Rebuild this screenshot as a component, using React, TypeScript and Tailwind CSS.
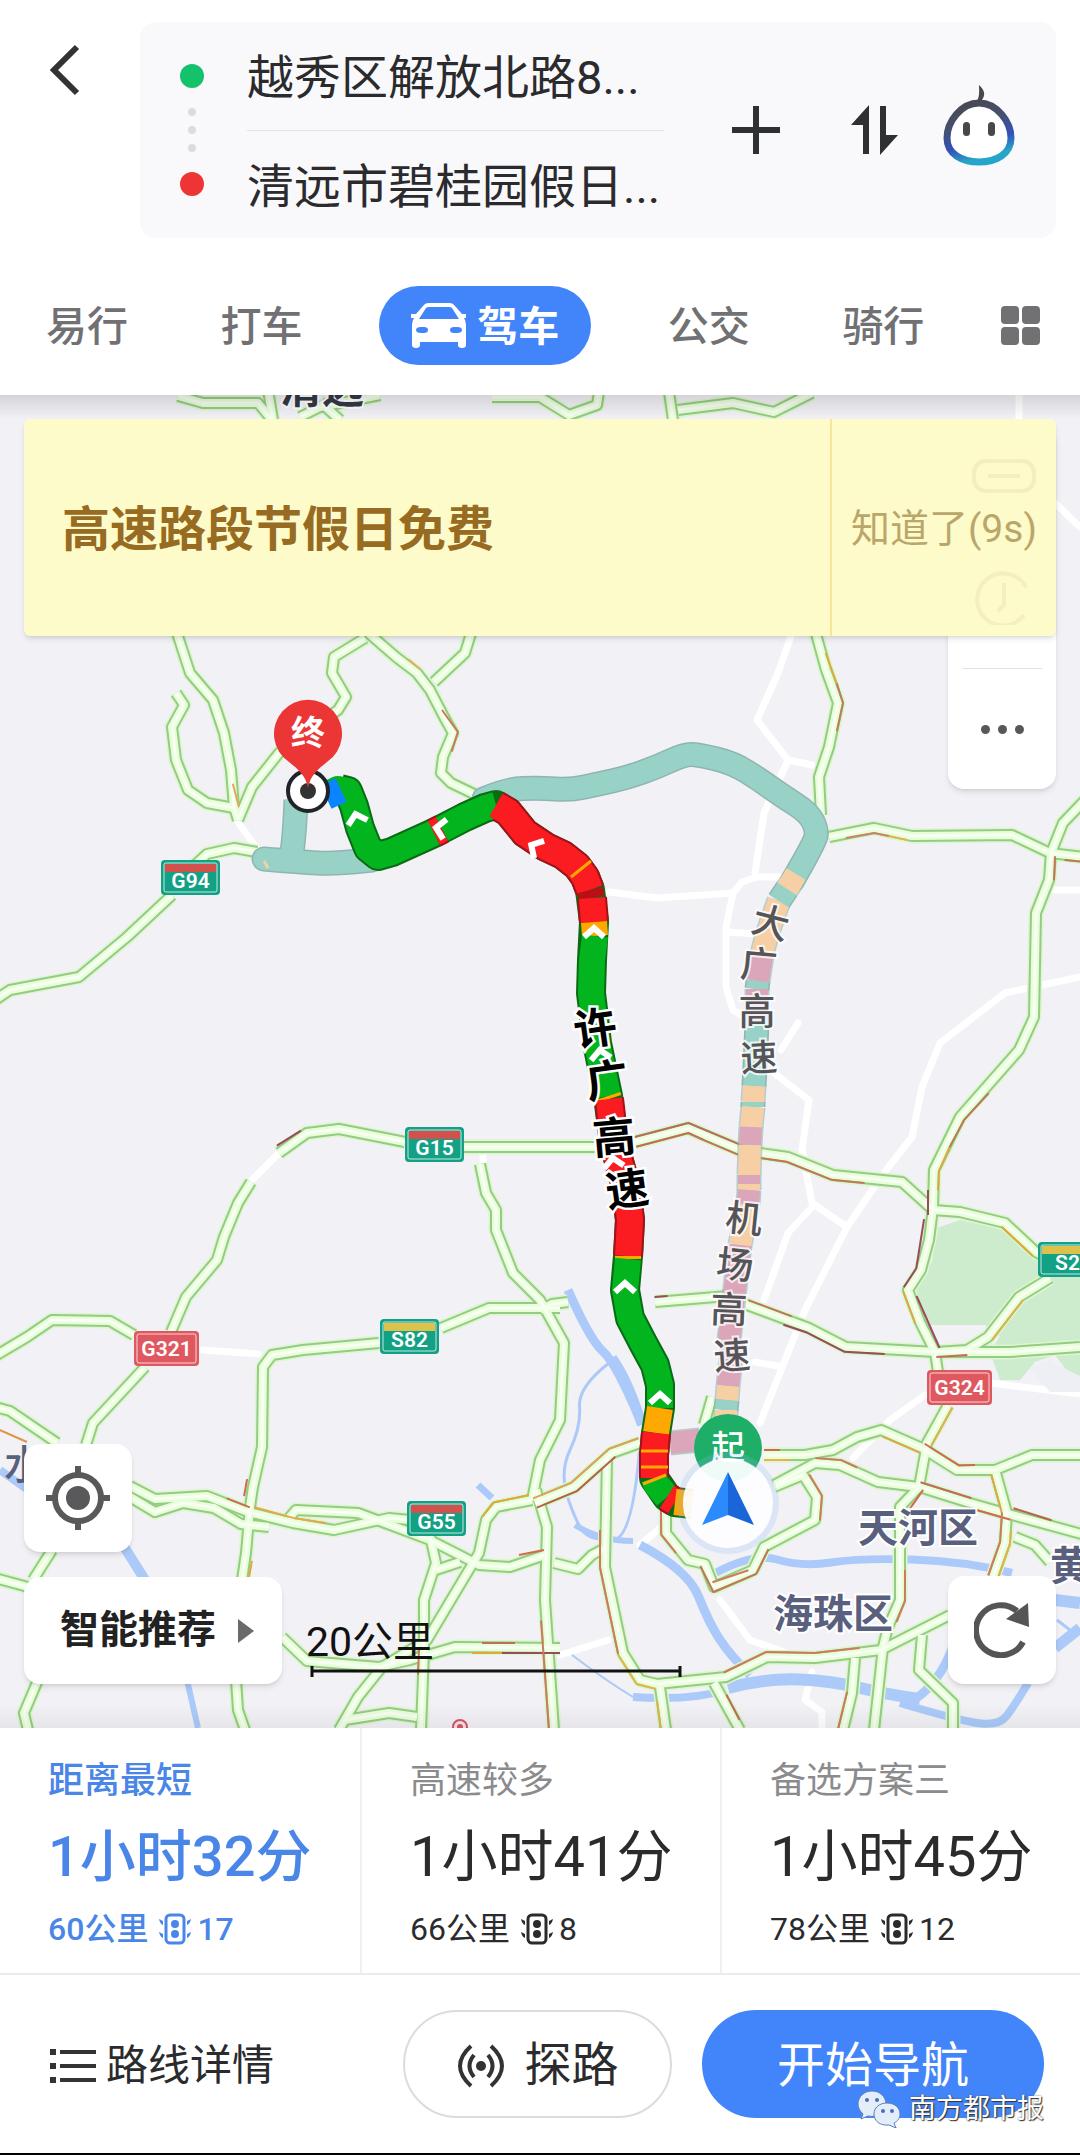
import React from 'react';

type Point = [number, number];

const TEAL = '#98d2c6';
const PEACH = '#f7cfa5';
const PINK = '#dba6b9';
const GREEN = '#02b51e';
const RED = '#fb1c22';
const ORANGE = '#ffa800';

const parse = (s: string): Point[] =>
  s.split(' ').map((p) => p.split(',').map(Number) as Point);

const line = (s: string) => 'M' + s.split(' ').join('L');

// rounded version of a polyline, it bends through the middle of each segment
const smooth = (s: string) => {
  const p = parse(s);
  let d = `M${p[0]}`;
  for (let i = 1; i < p.length - 1; i++) {
    const last = i === p.length - 2;
    const ex = last ? p[i + 1][0] : (p[i][0] + p[i + 1][0]) / 2;
    const ey = last ? p[i + 1][1] : (p[i][1] + p[i + 1][1]) / 2;
    d += `Q${p[i]} ${ex},${ey}`;
  }
  return p.length < 3 ? line(s) : d;
};

// moves a polyline sideways, used for the traffic colour on one lane
const shift = (s: string, by: number) => {
  const p = parse(s);
  const moved = p.map(([x, y], i) => {
    const a = p[Math.max(i - 1, 0)];
    const b = p[Math.min(i + 1, p.length - 1)];
    const len = Math.hypot(b[0] - a[0], b[1] - a[1]) || 1;
    return `${x - ((b[1] - a[1]) / len) * by},${y + ((b[0] - a[0]) / len) * by}`;
  });
  return 'M' + moved.join('L');
};

const whiteRoads = [
  '1019,395 1019,418',
  '1055,503 1080,527',
  '791,636 778,673 757,720 788,760 812,765',
  '788,760 764,813 755,873',
  '609,892 657,898 733,893 726,927 726,987 733,1010 750,1020',
  '733,893 742,882 757,877 785,877',
  '726,932 760,934',
  '798,1023 781,1050',
  '1053,890 1080,890',
  '1080,977 1005,993 940,1043 922,1087 912,1137 884,1173 847,1227 805,1310 760,1423',
  '774,1073 809,1100 802,1150 812,1203 847,1227',
  '812,1207 788,1233 764,1300',
  '252,1180 279,1153',
  '203,1350 258,1354',
  '483,1154 483,1164',
  '238,822 258,850',
  '27,1337 8,1349',
  '990,1383 1080,1394',
  '720,1600 750,1640 800,1658',
  '812,1672 805,1700 822,1712 822,1728',
  '640,1545 660,1528 664,1528',
  '853,1458 890,1420 925,1395',
  '755,1362 778,1366',
  '560,1655 608,1640',
];

const rivers: [string, number][] = [
  ['568,1290 590,1340 616,1363 640,1420', 9],
  ['612,1358 628,1380 642,1425', 10],
  ['609,1363 578,1387 581,1427 559,1473 578,1527 592,1540 633,1540 640,1443', 3],
  ['575,1525 600,1541 633,1541', 6],
  ['640,1545 688,1570 709,1623 730,1655 750,1675', 9],
  ['708,1577 752,1552 802,1567 860,1558 964,1561 1012,1573', 8],
  ['728,1688 767,1678 833,1681 884,1694 920,1699', 12],
  ['905,1705 940,1688 955,1640', 9],
  ['900,1703 950,1718 998,1727 1015,1705 1028,1683', 8],
  ['633,1697 690,1701 726,1690', 8],
  ['572,1655 605,1680 633,1697', 2],
  ['1055,1600 1080,1603', 12],
  ['1055,1648 1080,1628', 11],
  ['1057,1620 1070,1630', 3],
  ['123,1545 145,1580', 10],
  ['187,1680 198,1728', 6],
  ['478,1485 492,1498', 7],
  ['0,1470 28,1490', 8],
];

const roads = [
  '178,396 203,403 258,403 272,420',
  '268,390 273,420',
  '380,395 320,407 300,417',
  '320,402 340,420',
  '492,397 540,397 569,415 597,405 599,392',
  '669,392 673,420',
  '678,410 733,403 774,412 812,393',
  '176,630 190,673 213,700 224,733 231,770 234,807 238,820',
  '176,693 184,705 172,727 176,760 188,790 207,803 234,808',
  '238,820 252,787 279,753 310,730 338,710 346,697 332,673 334,657 365,638',
  '365,630 396,657 417,673 430,690 444,717 453,733 443,757 441,773 451,783 476,795',
  '472,630 465,653 434,682',
  '257,852 234,848 207,854 195,865',
  '172,895 127,937 79,977 10,990 -5,1000',
  '815,630 826,670 838,703 829,747 819,777 821,815',
  '829,837 874,828 912,836 1012,835 1050,853 1085,857',
  '1085,800 1063,823 1051,853 1049,880 1036,913 1034,1017 1019,1050 960,1117 934,1170 933,1208 929,1240 921,1270 908,1290 920,1322 935,1352 938,1372',
  '462,1147 605,1147',
  '405,1142 339,1129 307,1133 279,1153',
  '251,1182 238,1203 224,1237 217,1260 186,1297 171,1332',
  '145,1367 93,1423 86,1445',
  '52,1550 33,1580',
  '38,1680 24,1713 28,1730',
  '134,1335 110,1321 52,1320 27,1337 -5,1356',
  '441,1328 489,1308 560,1308',
  '379,1343 303,1350 272,1355 263,1367 262,1447 253,1487 250,1507 246,1553 242,1580',
  '236,1680 238,1710 245,1730',
  '480,1164 486,1193 496,1210 496,1230 513,1273 540,1300 564,1343 560,1420 540,1460 532,1500',
  '532,1500 496,1507 486,1520 479,1553 427,1640 382,1667 358,1697 339,1730',
  '130,1486 155,1499 207,1496 248,1512 293,1523 334,1530 389,1518 410,1520',
  '130,1497 155,1512 183,1503 214,1508 241,1524 269,1527',
  '289,1518 296,1510 358,1513 385,1523 430,1540 479,1565 510,1567 545,1555',
  '430,1536 436,1563 424,1600 424,1650 421,1730',
  '436,1570 460,1562',
  '282,1637 307,1661 379,1667 410,1660 455,1647 560,1648',
  '345,1720 389,1713 417,1717',
  '-5,1407 10,1411 57,1443',
  '-5,1578 28,1587',
  '635,1142 688,1128 740,1150 788,1157 833,1175 902,1182 933,1210 960,1212 1005,1223 1036,1252 1050,1260',
  '1050,1278 1019,1297 988,1337 967,1350 936,1352',
  '655,1302 728,1296 747,1305 809,1328 846,1347 936,1352 1010,1352 1080,1347',
  '764,1455 805,1455 833,1450 857,1437 881,1430 922,1448 957,1470 995,1470 1032,1455 1085,1455',
  '774,1485 815,1463 840,1465 878,1482 919,1487 970,1503 1012,1515 1085,1535',
  '948,1405 927,1443 919,1487 900,1507 900,1600 888,1627 883,1647 874,1730',
  '996,1473 1007,1513 1005,1543 993,1577',
  '774,1487 803,1475 817,1497 815,1520 764,1547 753,1570 714,1587 705,1564 688,1560 666,1533 666,1510',
  '535,1503 574,1487 612,1453 640,1443',
  '607,1457 605,1567 623,1653 640,1680 657,1684 726,1677 767,1657 815,1658 881,1650 950,1615',
  '536,1490 547,1527 545,1600 554,1730',
  '554,1563 578,1569 592,1555 607,1547',
  '660,1687 666,1730',
  '714,1683 740,1730',
  '855,1658 852,1693 843,1730',
  '922,1635 919,1670 953,1703 953,1730',
  '1015,1537 1035,1545 1050,1562',
  '712,1397 704,1425',
  '540,1310 552,1304 568,1302',
];

const traffic: [string, number, string][] = [
  ['438,713 453,733 447,750', -5, '#c87a5c'],
  ['405,663 417,673', -5, '#e0b060'],
  ['228,785 234,808', -5, '#e5a65c'],
  ['821,655 832,685', -5, '#e2a93a'],
  ['832,685 838,703 832,730', -5, '#c17a5c'],
  ['845,833 874,828 890,831', 5, '#c88468'],
  ['890,831 908,835', 5, '#e8b44a'],
  ['1050,856 1049,880', -5, '#c47458'],
  ['1065,855 1085,857', 5, '#c47458'],
  ['985,1090 960,1117 945,1145', -5, '#c0755a'],
  ['945,1145 934,1170 933,1190', -5, '#e0a546'],
  ['933,1190 933,1215', 5, '#9c4a5e'],
  ['929,1220 921,1270 908,1290', 5, '#9c4a5e'],
  ['908,1290 920,1322', 5, '#e0a546'],
  ['912,1298 935,1350', -5, '#9c4a5e'],
  ['303,1134 279,1149', 4, '#9c4a5e'],
  ['635,1142 688,1128 705,1135', 5, '#c46c5a'],
  ['635,1142 688,1128 740,1150', -5, '#b96c60'],
  ['700,1133 740,1150', 5, '#c47458'],
  ['760,1153 788,1157 833,1175 865,1178', 5, '#c47458'],
  ['1005,1223 1036,1252', 5, '#e0a93a'],
  ['1019,1297 988,1337', -5, '#e0b24a'],
  ['655,1302 668,1301', -5, '#9c4a5e'],
  ['747,1305 790,1321', -5, '#c47458'],
  ['785,1320 809,1328 846,1347 885,1349', 5, '#9c4a5e'],
  ['967,1350 936,1352', -5, '#c46c5a'],
  ['249,1497 252,1480', -5, '#cf6a4e'],
  ['225,1503 248,1512', -5, '#cf6a4e'],
  ['253,1512 293,1523 325,1528', -5, '#e8a64a'],
  ['247,1560 244,1577', -5, '#e0a93a'],
  ['530,1500 496,1507 486,1520', 5, '#e0a93a'],
  ['424,1650 423,1675', 5, '#cf7a5e'],
  ['482,1648 515,1648', -5, '#c46c5a'],
  ['472,1648 502,1648', 5, '#e0a93a'],
  ['502,1648 560,1648', 5, '#9c4a5e'],
  ['-5,1428 27,1442', 0, '#e0944a'],
  ['520,1560 545,1555', -5, '#cf6a4e'],
  ['764,1455 780,1455', -5, '#cf6a4e'],
  ['764,1455 790,1455', 5, '#e8b44a'],
  ['885,1432 922,1448', 5, '#e0a546'],
  ['922,1448 957,1470 975,1470', -5, '#cf6a4e'],
  ['815,1463 840,1465 855,1472', -5, '#cf7a5e'],
  ['919,1487 970,1503', -5, '#c46c5a'],
  ['970,1503 1012,1515', 5, '#cf6a4e'],
  ['1012,1513 1050,1525', -5, '#b9604e'],
  ['948,1405 927,1443', -5, '#e0b24a'],
  ['919,1487 905,1507', -5, '#cf6a4e'],
  ['900,1570 900,1600 892,1620', -5, '#cf7a5e'],
  ['996,1473 1007,1513', 5, '#e0a546'],
  ['1007,1513 1005,1543 993,1577', 5, '#cf7a5e'],
  ['1006,1530 1005,1543 993,1577', -5, '#e0b24a'],
  ['805,1477 817,1497 815,1520', -5, '#cf7a5e'],
  ['764,1547 753,1570 714,1587 705,1564', -5, '#c47458'],
  ['750,1575 714,1587', 5, '#cf7a5e'],
  ['535,1503 574,1487 612,1453 640,1443', -5, '#e0a05a'],
  ['535,1503 574,1487 612,1453', 5, '#b9604e'],
  ['605,1530 605,1567 623,1653', 5, '#cf7a5e'],
  ['623,1653 640,1680 657,1684', 5, '#e8b44a'],
  ['726,1677 767,1657 815,1658 860,1653', -5, '#cf7a5e'],
  ['666,1510 666,1533 680,1550', 5, '#cf7a5e'],
  ['546,1620 554,1730', 5, '#cf7a5e'],
  ['722,1697 735,1722', -5, '#c46c5a'],
  ['852,1693 843,1730', 5, '#cf7a5e'],
  ['662,1700 666,1730', 5, '#e0b24a'],
];

const altRoute: [string, string][] = [
  ['296,800 294,848 290,862', TEAL],
  ['264,859 300,862 335,864 372,860', TEAL],
  ['484,799 506,789 540,788 571,790 598,784 626,778 657,767 685,754 700,755 733,763 760,780 781,795 809,813 817,830 815,842 793,880', TEAL],
  ['793,880 787,889', PEACH],
  ['787,889 779,901', TEAL],
  ['779,901 766,935 762,955', PEACH],
  ['762,955 758,981', PINK],
  ['758,981 757,989', TEAL],
  ['757,989 757,1020', PINK],
  ['757,1020 756,1050 754,1086', TEAL],
  ['754,1086 753,1102', PEACH],
  ['753,1102 753,1107', TEAL],
  ['753,1107 751,1127', PEACH],
  ['751,1127 750,1145', PINK],
  ['750,1145 749,1175', PEACH],
  ['749,1175 749,1184', PINK],
  ['749,1184 749,1190', PEACH],
  ['749,1190 748,1205', PINK],
  ['748,1205 740,1245', PEACH],
  ['740,1245 729,1340', PINK],
  ['733,1340 728,1386', PINK],
  ['728,1386 727,1400', PEACH],
  ['727,1400 726,1410', TEAL],
  ['726,1410 726,1440', PEACH],
  ['670,1443 700,1440', PINK],
];

const mainRoute: [string, string][] = [
  ['326,795 338,789 348,791 354,806 360,828 368,848 378,856 392,852 434,833', GREEN],
  ['434,833 442,829', RED],
  ['442,829 465,817 485,808 496,805', GREEN],
  ['496,805 508,812 525,833 546,847 563,855 577,866 585,877 590,890', RED],
  ['590,890 592,898', '#b81016'],
  ['592,898 594,922', RED],
  ['594,922 595,936', ORANGE],
  ['595,936 592,960 591,993 597,1043 608,1096', GREEN],
  ['608,1096 609,1099', ORANGE],
  ['609,1099 614,1143 626,1187 630,1220 628,1256', RED],
  ['628,1256 628,1259', ORANGE],
  ['628,1259 625,1290 630,1318 643,1343 655,1365 660,1385 660,1408', GREEN],
  ['660,1408 656,1433', ORANGE],
  ['656,1433 654,1455 654,1478', RED],
  ['654,1478 656,1484 667,1497', GREEN],
  ['667,1497 675,1502', RED],
  ['675,1502 692,1504', ORANGE],
];

const mainRouteLine =
  '340,789 348,791 354,806 360,828 368,848 378,856 392,852 434,833 465,817 485,808 496,805 508,812 525,833 546,847 563,855 577,866 585,877 590,890 594,922 592,960 591,993 597,1043 608,1096 614,1143 626,1187 630,1220 628,1256 625,1290 630,1318 643,1343 655,1365 660,1385 660,1408 656,1433 654,1455 654,1478 667,1497 675,1502 692,1504';

const chevrons: [number, number, number][] = [
  [356, 816, -15],
  [438, 828, -80],
  [533, 846, -60],
  [594, 930, 0],
  [600, 1052, -8],
  [613, 1160, -8],
  [625, 1285, 0],
  [660, 1396, 0],
];

const roadNames: [string, number, number, number, boolean][] = [
  ['许', 595, 1028, -8, true],
  ['广', 607, 1080, -8, true],
  ['高', 614, 1137, -5, true],
  ['速', 627, 1189, -8, true],
  ['大', 771, 922, 15, false],
  ['广', 759, 964, 5, false],
  ['高', 757, 1011, 0, false],
  ['速', 759, 1057, -3, false],
  ['机', 744, 1218, 6, false],
  ['场', 735, 1264, 6, false],
  ['高', 729, 1309, 2, false],
  ['速', 732, 1355, -4, false],
];

const shields: [string, number, number, string | null][] = [
  ['G94', 161, 860, '#d2514c'],
  ['G15', 405, 1127, '#d2514c'],
  ['S82', 380, 1319, '#dcc14a'],
  ['G55', 407, 1501, '#d2514c'],
  ['S2', 1038, 1242, '#dcc14a'],
  ['G321', 134, 1331, null],
  ['G324', 927, 1370, null],
];

const Shield: React.FC<{ name: string; x: number; y: number; band: string | null }> = ({ name, x, y, band }) => {
  const w = band ? 59 : 65;
  return (
    <g transform={`translate(${x} ${y})`}>
      <rect width={w} height="35" rx="4" fill={band ? '#12a184' : '#e0585f'} />
      {band && <rect x="4" y="4" width={w - 8} height="8" fill={band} />}
      <rect x="3" y="3" width={w - 6} height="29" rx="2" fill="none" stroke="#fff" strokeOpacity=".75" />
      <text x={w / 2} y={band ? 28 : 25} textAnchor="middle" fontSize="21" fontWeight="600" fill="#fff">
        {name}
      </text>
    </g>
  );
};

const RouteMap: React.FC = () => {
  return (
    <svg viewBox="0 395 1080 1333" className="block w-full h-auto bg-[#f1f1f6]" role="img" aria-label="路线地图">
      <g fill="none" stroke="#fff" strokeWidth="7" strokeLinejoin="round" strokeLinecap="round">
        {whiteRoads.map((r) => <path key={r} d={line(r)} />)}
      </g>
      <path d="M937,1228L960,1220L1005,1230L1040,1255L1080,1256V1378L1068,1372L1055,1355L1035,1362L1020,1380H1000L990,1352L1000,1336L985,1325L930,1325L915,1290L932,1262Z" fill="#cceccd" />
      <path d="M1030,1368L1050,1360L1072,1372L1080,1376V1392H1050Z" fill="#eeeef5" />
      <g fill="none" stroke="#abcaf9" strokeLinejoin="round">
        {rivers.map(([r, w]) => <path key={r} d={smooth(r)} strokeWidth={w} />)}
      </g>
      <text x="4" y="1479" fontSize="40" fontWeight="500" fill="#59607d">水</text>

      <g fill="none" strokeLinejoin="round">
        <g stroke="#dcf6cd" strokeWidth="15">
          {roads.map((r) => <path key={r} d={line(r)} />)}
        </g>
        <g stroke="#96cb85" strokeWidth="12">
          {roads.map((r) => <path key={r} d={line(r)} />)}
        </g>
        <g stroke="#e8fedb" strokeWidth="8">
          {roads.map((r) => <path key={r} d={line(r)} />)}
        </g>
        <g stroke="#f6fff0" strokeWidth="3">
          {roads.map((r) => <path key={r} d={line(r)} />)}
        </g>
        {traffic.map(([r, by, color]) => (
          <path key={r + by} d={shift(r, by)} stroke={color} strokeWidth="2" />
        ))}
      </g>

      <text x="280" y="403" fontSize="42" fontWeight="700" fill="#343843" stroke="#fff" strokeWidth="4" paintOrder="stroke">清远</text>
      {shields.map(([name, x, y, band]) => <Shield key={name} name={name} x={x} y={y} band={band} />)}

      <g fill="none" strokeLinejoin="round">
        {altRoute.map(([r, color]) => (
          <path key={r} d={smooth(r)} stroke="#8fb5b3" strokeWidth="25" strokeLinecap={r.length > 30 ? 'round' : 'butt'} opacity={color === TEAL ? 1 : 0.6} />
        ))}
        {altRoute.map(([r, color]) => (
          <path key={r} d={smooth(r)} stroke={color} strokeWidth="22" strokeLinecap={r.length > 30 ? 'round' : 'butt'} />
        ))}
        <path d={line('796,874 787,889')} stroke={PEACH} strokeWidth="22" />
        <path d={line('787,889 779,901')} stroke={TEAL} strokeWidth="22" />
        <path d={line('264,861 268,868')} stroke={PEACH} strokeWidth="3" />
      </g>

      <g fill="none" strokeLinejoin="round">
        <path d={line(mainRouteLine)} stroke="#0b6b14" strokeWidth="30" />
        {mainRoute.filter(([, color]) => color === RED).map(([r]) => (
          <path key={r} d={line(r)} stroke="#a3121a" strokeWidth="30" />
        ))}
        {mainRoute.map(([r, color]) => (
          <path key={r} d={line(r)} stroke={color} strokeWidth="26" />
        ))}
        <path d="M326,797L341,790" stroke="#0a84ff" strokeWidth="26" />
        <path d="M571,877L591,861M641,1451H668M641,1467H668M643,1484L666,1475" stroke={ORANGE} strokeWidth="3" />
      </g>
      {chevrons.map(([x, y, r]) => (
        <path key={y} d="M-10,7L0,-2L10,7" transform={`translate(${x} ${y}) rotate(${r})`} fill="none" stroke="#fff" strokeWidth="6" />
      ))}

      {roadNames.map(([ch, x, y, r, main]) => (
        <text
          key={`${x}-${y}`}
          transform={`translate(${x} ${y}) rotate(${r})`}
          y={main ? 16 : 14}
          textAnchor="middle"
          fontSize={main ? 43 : 37}
          fontWeight={main ? 700 : 500}
          fill={main ? '#000' : '#555559'}
          stroke="#fff"
          strokeWidth={main ? 5 : 4}
          strokeOpacity={main ? 1 : 0.8}
          paintOrder="stroke"
        >
          {ch}
        </text>
      ))}

      <g fontSize="40" fontWeight="700" fill="#59607d" stroke="#fff" strokeWidth="4" paintOrder="stroke">
        <text x="858" y="1542">天河区</text>
        <text x="773" y="1628">海珠区</text>
        <text x="1050" y="1580">黄</text>
      </g>
      <circle cx="460" cy="1727" r="7" fill="#fbe3e6" stroke="#d6566a" strokeWidth="2" />
      <circle cx="460" cy="1727" r="3" fill="#d6566a" />

      {/* destination pin */}
      <circle cx="308" cy="791" r="20" fill="#fff" stroke="#202328" strokeWidth="4" />
      <circle cx="308" cy="791" r="8" fill="#333" />
      <path d="M308,788C306,776 298,769 289,762A34,34 0 1 1 327,762C318,769 310,776 308,788Z" fill="#ec3636" />
      <text x="308" y="745" textAnchor="middle" fontSize="34" fontWeight="700" fill="#fff">终</text>

      {/* start pin and current position */}
      <circle cx="728" cy="1448" r="34" fill="#1fae68" />
      <text x="728" y="1460" textAnchor="middle" fontSize="34" fontWeight="500" fill="#fff">起</text>
      <circle cx="728" cy="1503" r="51" fill="#8db8f5" opacity=".2" />
      <circle cx="728" cy="1503" r="45" fill="#fff" opacity=".93" />
      <path d="M728,1472L702,1525L728,1515Z" fill="#2b8afc" />
      <path d="M728,1472L754,1525L728,1515Z" fill="#1a66d9" />

      {/* scale */}
      <text x="306" y="1656" fontSize="41" fill="#111">20公里</text>
      <path d="M312,1671H680M312,1666V1677M680,1666V1677" stroke="#111" strokeWidth="3" fill="none" />
    </svg>
  );
};

const LightIcon = () => (
  <svg viewBox="0 0 34 32" className="w-[34px] h-8 ml-[10px] mr-[5px]" fill="none" stroke="currentColor" strokeWidth="3">
    <rect x="8" y="2" width="18" height="28" rx="4" />
    <g fill="currentColor" stroke="none">
      <circle cx="17" cy="11" r="4" />
      <circle cx="17" cy="21" r="4" />
      <path d="M1,6L5,8V12Q2,11 1,6ZM1,19L5,21V25Q2,24 1,19ZM33,6L29,8V12Q32,11 33,6ZM33,19L29,21V25Q32,24 33,19Z" />
    </g>
  </svg>
);

const plans = [
  { label: '距离最短', time: '1小时32分', distance: '60公里', lights: 17, active: true },
  { label: '高速较多', time: '1小时41分', distance: '66公里', lights: 8, active: false },
  { label: '备选方案三', time: '1小时45分', distance: '78公里', lights: 12, active: false },
];

const App: React.FC = () => {
  return (
    <main className="w-full bg-white text-[#2b2b2e] font-[Roboto,'Noto_Sans_CJK_SC',sans-serif]">
      <header className="pt-[22px]">
        <div className="flex items-start pl-[46px] pr-6">
          <button aria-label="返回" className="mt-5 w-[94px]">
            <svg viewBox="0 0 36 56" className="w-9 h-14" fill="none" stroke="#333" strokeWidth="6">
              <path d="M31,5L8,28L31,51" />
            </svg>
          </button>
          <div className="flex-1 min-w-0 flex items-center h-[216px] pl-10 pr-10 rounded-2xl bg-[#f9f9fb]">
            <div className="flex flex-col items-center gap-[10px] mr-[43px]">
              <span className="size-6 mb-[10px] rounded-full bg-[#14c26b]"></span>
              <span className="size-2 rounded-full bg-[#dcdce0]"></span>
              <span className="size-2 rounded-full bg-[#dcdce0]"></span>
              <span className="size-2 rounded-full bg-[#dcdce0]"></span>
              <span className="size-6 mt-[10px] rounded-full bg-[#ee3434]"></span>
            </div>
            <div className="flex-1 min-w-0 text-[47px]">
              <input aria-label="起点" defaultValue="越秀区解放北路8..." className="block w-full h-[88px] pb-6 bg-transparent outline-none" />
              <hr className="border-[#e3e3e6]" />
              <input aria-label="终点" defaultValue="清远市碧桂园假日..." className="block w-full h-[88px] pt-4 bg-transparent outline-none" />
            </div>
            <div className="flex items-center ml-[68px] text-[#2f3033]">
              <button aria-label="添加途经点">
                <svg viewBox="0 0 48 48" className="size-12" stroke="currentColor" strokeWidth="6">
                  <path d="M24,0V48M0,24H48" />
                </svg>
              </button>
              <button aria-label="交换起终点" className="ml-[71px]">
                <svg viewBox="0 0 48 50" className="w-12 h-[50px]" fill="currentColor">
                  <path d="M18,0V49H12V20H0ZM29,50V1H35V30H47Z" />
                </svg>
              </button>
              <button aria-label="语音助手" className="ml-[43px] -mt-2">
                <svg viewBox="0 0 74 84" className="w-[74px] h-[84px]">
                  <defs>
                    <linearGradient id="face" x1="0" y1="0" x2=".3" y2="1">
                      <stop offset="0" stopColor="#48484c" />
                      <stop offset=".4" stopColor="#46506e" />
                      <stop offset=".75" stopColor="#3450b8" />
                      <stop offset="1" stopColor="#27a5c8" />
                    </linearGradient>
                  </defs>
                  <path d="M37,19C19,19 5,38 5,54C5,70 20,78 37,78C54,78 69,70 69,54C69,38 55,19 37,19Z" fill="#fff" stroke="url(#face)" strokeWidth="7" />
                  <path d="M37,1C43,6 44,12 39,17H35C38,12 37,6 37,1Z" fill="#48484c" />
                  <rect x="21" y="38" width="7" height="14" rx="3.5" fill="#48484c" />
                  <rect x="46" y="38" width="7" height="14" rx="3.5" fill="#48484c" />
                </svg>
              </button>
            </div>
          </div>
        </div>

        <nav className="flex items-center justify-between pt-12 pb-[30px] pl-[46px] pr-10 text-[41px] leading-none font-medium text-[#717174]">
          <button className="pt-1">易行</button>
          <button className="pt-1 pl-4">打车</button>
          <button aria-current="page" className="flex items-center h-[79px] px-8 rounded-full bg-[#4285fb] text-white font-bold">
            <svg viewBox="0 0 56 46" className="w-14 h-[46px] mr-[10px]">
              <path fillRule="evenodd" fill="#fff" d="M17,0H39Q42,0 44,3L51,11H55V15H53Q55,18 55,22V42Q55,45 51,45Q47,45 47,42V39H9V42Q9,45 5,45Q1,45 1,42V22Q1,18 3,15H0V11H5L12,3Q14,0 17,0ZM18,4Q16,4 15,5L8,16H48L41,5Q40,4 38,4ZM10,24Q5,24 5,27Q5,30 10,30H13Q17,30 17,27Q17,24 13,24ZM43,24Q39,24 39,27Q39,30 43,30H46Q51,30 51,27Q51,24 46,24Z" />
            </svg>
            <span className="pt-1">驾车</span>
          </button>
          <button className="pt-1">公交</button>
          <button className="pt-1 pl-4">骑行</button>
          <button aria-label="更多出行方式" className="grid grid-cols-2 gap-[3px]">
            <span className="size-[18px] rounded bg-[#717174]"></span>
            <span className="size-[18px] rounded bg-[#717174]"></span>
            <span className="size-[18px] rounded bg-[#717174]"></span>
            <span className="size-[18px] rounded bg-[#717174]"></span>
          </button>
        </nav>
      </header>

      <section className="relative overflow-hidden">
        <RouteMap />
        <div className="absolute inset-x-0 top-0 h-6 bg-linear-to-b from-black/12 to-transparent"></div>
        <div className="absolute inset-x-0 bottom-0 h-6 bg-linear-to-t from-black/5 to-transparent"></div>

        <div className="absolute right-6 top-[30px] flex flex-col items-center justify-end w-[108px] h-[364px] rounded-2xl bg-white shadow-md">
          <hr className="w-20 border-[#dfe2e6]" />
          <button aria-label="更多" className="flex items-center justify-center gap-2 w-full h-[120px]">
            <span className="size-[9px] rounded-full bg-[#58585b]"></span>
            <span className="size-[9px] rounded-full bg-[#58585b]"></span>
            <span className="size-[9px] rounded-full bg-[#58585b]"></span>
          </button>
        </div>

        <div className="absolute inset-x-6 top-6 flex h-[217px] rounded-md bg-[#fefbca] shadow-md">
          <p className="flex-1 flex items-center pt-1 pl-[38px] text-5xl font-bold text-[#986b22]">高速路段节假日免费</p>
          <button className="relative w-[226px] pt-1 border-l-2 border-[#f7e59a] text-[39px] text-[#bba66a]">
            {/* the map tools shine through faintly */}
            <svg viewBox="0 0 64 170" className="absolute right-5 top-9 w-16 h-[170px]" fill="none" stroke="#f3efbf" strokeWidth="4">
              <rect x="2" y="6" width="60" height="30" rx="12" />
              <path d="M16,21H48M52,160A26,26 0 1 1 54,132M32,128V150L26,156" />
            </svg>
            <span className="relative">知道了(9s)</span>
          </button>
        </div>

        <div className="absolute left-6 bottom-11 flex flex-col items-start gap-[25px]">
          <button aria-label="定位" className="flex items-center justify-center size-[108px] rounded-2xl bg-white shadow-md">
            <svg viewBox="0 0 64 64" className="size-16" fill="none" stroke="#59595c" strokeWidth="6">
              <circle cx="32" cy="32" r="23" />
              <circle cx="32" cy="32" r="12" fill="#59595c" stroke="none" />
              <path d="M32,0V10M32,54V64M0,32H10M54,32H64" />
            </svg>
          </button>
          <button className="flex items-center h-[107px] pl-9 pr-7 gap-[22px] rounded-2xl bg-white shadow-md text-[39px] font-bold text-[#222]">
            智能推荐
            <svg viewBox="0 0 16 24" className="w-4 h-6" fill="#6a6a6d">
              <path d="M0,0L16,12L0,24Z" />
            </svg>
          </button>
        </div>

        <button aria-label="刷新路线" className="absolute right-6 bottom-11 flex items-center justify-center size-[108px] rounded-2xl bg-white shadow-md">
          <svg viewBox="0 0 56 56" className="size-14">
            <path d="M49,40A25,25 0 1 1 43,9" fill="none" stroke="#555558" strokeWidth="6" />
            <path d="M54,1L55,25L32,17Z" fill="#555558" />
          </svg>
        </button>
      </section>

      <section className="grid grid-cols-3 border-b-2 border-[#ebebef]">
        {plans.map((plan) => (
          <button
            key={plan.label}
            className={
              plan.active
                ? 'h-[245px] pt-3 pl-12 text-left text-[#4a86e8] font-medium'
                : 'h-[245px] pt-3 pl-12 text-left border-l-2 border-[#f0f0f3]'
            }
          >
            <span className={plan.active ? 'block text-4xl' : 'block text-4xl text-[#8b8b8e]'}>{plan.label}</span>
            <span className="block mt-5 text-[56px] leading-[72px]">{plan.time}</span>
            <span className="flex items-center mt-3 text-[32px] leading-12">
              {plan.distance}
              <LightIcon />
              {plan.lights}
            </span>
          </button>
        ))}
      </section>

      <footer className="relative flex items-center h-[180px] pt-[7px] pb-2 pl-[50px] pr-9 border-b-2 border-black">
        <button className="flex items-center gap-[10px] mr-auto pt-1 text-[42px]">
          <svg viewBox="0 0 46 34" className="w-[46px] h-[34px]" stroke="#333" strokeWidth="4">
            <path d="M10,3H46M10,17H46M10,31H46" />
            <path d="M0,3H6M0,17H6M0,31H6" strokeWidth="6" />
          </svg>
          路线详情
        </button>
        <button className="flex items-center justify-center gap-5 w-[269px] h-[108px] mr-[30px] pt-1 rounded-full border-2 border-[#dcdce0] text-[47px]">
          <svg viewBox="0 0 48 44" className="w-12 h-11" fill="none" stroke="#333" strokeWidth="4">
            <circle cx="24" cy="22" r="5" fill="#333" stroke="none" />
            <path d="M17,11Q8,22 17,33M31,11Q40,22 31,33M14,2Q-8,22 14,42M34,2Q56,22 34,42" />
          </svg>
          探路
        </button>
        <button className="w-[342px] h-[108px] pt-1 rounded-full bg-[#4285fb] text-5xl text-white">开始导航</button>

        <div className="absolute right-9 bottom-6 flex items-center gap-2 text-[27px] leading-10 text-white [text-shadow:1px_1px_1px_#333,0_0_2px_#555]">
          <svg viewBox="0 0 44 38" className="w-11 h-[38px]" fill="#e4eefb" stroke="#5b7fb8">
            <path d="M15,1C7,1 1,7 1,14C1,18 3,21 6,24L4,29L11,26C20,28 29,22 29,14C29,7 23,1 15,1Z" />
            <path d="M30,13C22,13 17,18 17,24C17,31 23,36 32,35L39,38L37,33C41,31 43,28 43,24C43,18 38,13 30,13Z" />
            <g fill="#4a6fae" stroke="none">
              <circle cx="10" cy="10" r="2" />
              <circle cx="20" cy="10" r="2" />
              <circle cx="26" cy="21" r="2" />
              <circle cx="35" cy="21" r="2" />
            </g>
          </svg>
          南方都市报
        </div>
      </footer>
    </main>
  );
};

export default App;
